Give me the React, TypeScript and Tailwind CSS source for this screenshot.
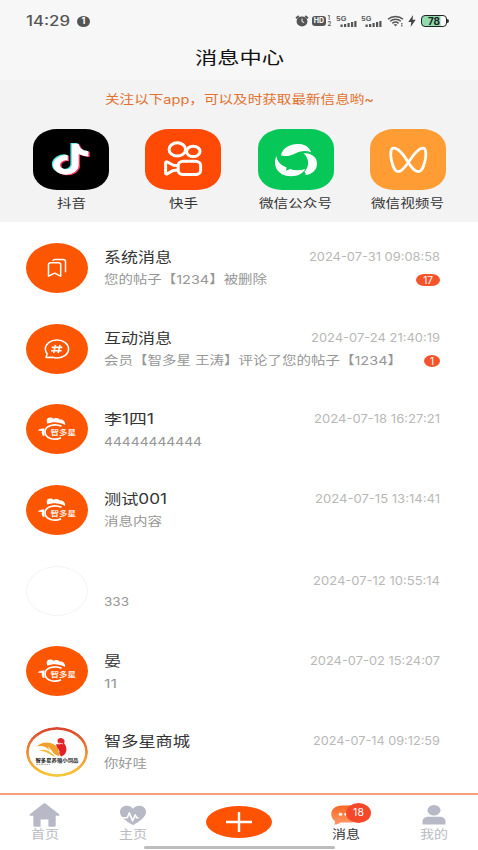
import { useLayoutEffect, useRef, useState } from "react";
import type { ReactNode } from "react";

interface IMessage {
  id: number;
  avatar: ReactNode;
  title: string;
  titleWidth: number;
  text: string;
  textWidth: number;
  time: string;
  timeWidth: number;
  badge?: string;
}

// Text stretched horizontally to a given width
const FitText = ({
  width,
  className = "",
  children,
}: {
  width: number;
  className?: string;
  children: string;
}) => {
  const ref = useRef<HTMLSpanElement>(null);
  const [scale, setScale] = useState(1);

  useLayoutEffect(() => {
    if (ref.current?.offsetWidth) {
      setScale(width / ref.current.getBoundingClientRect().width);
    }
  }, []);

  return (
    <span className={`block shrink-0 ${className}`} style={{ width }}>
      <span
        ref={ref}
        className="inline-block origin-left whitespace-pre align-top"
        style={{ transform: `scaleX(${scale})` }}
      >
        {children}
      </span>
    </span>
  );
};

const Signal = () => (
  <svg width="21" height="13" viewBox="0 0 21 13" fill="#555">
    <text x="0" y="5.6" fontSize="6.5" fontWeight="600" textLength="10.5" lengthAdjust="spacingAndGlyphs">
      5G
    </text>
    <rect x="4.5" y="9.5" width="2.2" height="2.5" />
    <rect x="8" y="9" width="2.2" height="3" />
    <rect x="11.5" y="8" width="2.2" height="4" />
    <rect x="15" y="7" width="2.2" height="5" />
    <rect x="18.3" y="6" width="2.2" height="6" />
  </svg>
);

const StatusBar = () => (
  <div className="flex h-[42px] items-center pl-[26px] pr-[29px] text-[#555]">
    <FitText width={44} className="text-[14px] font-medium leading-[16px]">
      14:29
    </FitText>
    <span className="ml-[7px] flex h-[11px] w-[13px] items-center justify-center rounded-[50%] bg-[#555] text-[9px] font-bold text-white">
      1
    </span>
    <div className="ml-auto flex items-center">
      <svg width="14" height="12" viewBox="0 0 14 12">
        <ellipse cx="7" cy="6.4" rx="5.4" ry="5" fill="#555" />
        <path d="M1 3.2L3.8 1M13 3.2L10.2 1" stroke="#555" strokeWidth="1.8" />
        <path d="M7 3.6v3l2.2 1" stroke="#f7f7f7" strokeWidth="1" fill="none" />
      </svg>
      <span className="ml-[3px] flex h-[10px] w-[14px] items-center justify-center rounded-[3px] bg-[#555] text-[7px] font-bold text-white">
        HD
      </span>
      <svg className="ml-[1px]" width="5" height="12" viewBox="0 0 5 12" fill="#555">
        <text x="0.5" y="5.2" fontSize="6" fontWeight="600">1</text>
        <text x="0.5" y="11.2" fontSize="6" fontWeight="600">2</text>
      </svg>
      <div className="ml-[4px] flex gap-[4px]">
        <Signal />
        <Signal />
      </div>
      <svg className="ml-[5px]" width="17" height="12" viewBox="0 0 17 12" fill="none" stroke="#555" strokeWidth="1.5">
        <path d="M1 4.2C5 .6 12 .6 16 4.2M3.2 6.3C6.2 3.7 10.8 3.7 13.8 6.3M5.4 8.3C7.2 6.8 9.8 6.8 11.6 8.3" />
        <path d="M6.5 9.3h4L8.5 11.5z" fill="#555" stroke="none" />
        <path d="M14.8 8v3.5" strokeWidth="1.2" strokeDasharray="1.4 .6" />
      </svg>
      <svg className="ml-[4px]" width="8" height="12" viewBox="0 0 8 12" fill="#444">
        <path d="M5 0L.3 7h3L2.6 12 7.7 4.8H4.6z" />
      </svg>
      <div className="ml-[5px] flex h-[12px] w-[26px] items-center justify-center rounded-[4px] border-[1.5px] border-[#222] bg-gradient-to-r from-[#8fdcae] from-75% to-white to-80%">
        <span className="text-[10px] font-bold leading-none text-[#222]">78</span>
      </div>
      <div className="h-[4px] w-[2px] rounded-r bg-[#333]" />
    </div>
  </div>
);

const notePath =
  "M448,209.91a210.06,210.06,0,0,1-122.77-39.25V349.38A162.55,162.55,0,1,1,185,188.31V278.2a74.62,74.62,0,1,0,52.23,71.18V0l88,0a121.18,121.18,0,0,0,1.86,22.17h0A122.18,122.18,0,0,0,381,102.39a121.43,121.43,0,0,0,67,20.14Z";

const DouyinIcon = () => (
  <svg width="76" height="61" viewBox="0 0 76 61">
    <g transform="translate(18.8 14) scale(.0785 .0605)">
      <path d={notePath} fill="#4de8e2" />
    </g>
    <g transform="translate(21.6 15.4) scale(.0785 .0605)">
      <path d={notePath} fill="#f5305d" />
    </g>
    <g transform="translate(20.2 14.7) scale(.0785 .0605)">
      <path d={notePath} fill="#fff" />
    </g>
  </svg>
);

const KuaishouIcon = () => (
  <svg width="76" height="61" viewBox="0 0 76 61" fill="none" stroke="#fff" strokeWidth="3" strokeLinejoin="round">
    <ellipse cx="32.3" cy="20.4" rx="8.2" ry="6.6" />
    <ellipse cx="48.3" cy="22.4" rx="6.7" ry="5.2" />
    <rect x="33.2" y="32.2" width="22.400" height="13.400" rx="5" ry="4" />
    <path d="M33 36.600l-4.600-.4-6-3.200c-1-.5-1.800-.1-1.800.9v10c0 1 .8 1.400 1.800.9l6-3.400 4.600-.4" />
  </svg>
);

const OfficialIcon = () => (
  <svg width="76" height="61" viewBox="0 0 76 61" fill="#fff">
    <path d="M23 26.200C24.500 18.500 33 14.300 41.500 15c6.500.5 10.300 4 11.500 8.300-3.500-1.500-7.500-1.800-11.500-.5-5.800 2-10 6-18.500 3.400z" />
    <path d="M45.500 24.300c7.500-.8 13.500 3.700 13.500 10.100 0 6.300-4.800 11-11.800 11.600.8-1.200.6-2.200-.9-3 5.300-5.700 5.200-13.300-.8-18.700z" />
    <path d="M18.500 27c-4.500 9.500 1.500 20.200 14.500 20.200 7 0 12-2.500 14.200-7.200-5.700 1.700-10.700 1.500-15 0l-4.200 1.800.6-3.400c-5.600-2-9.600-5.700-10.100-11.400z" />
  </svg>
);

const ChannelsIcon = () => (
  <svg width="76" height="61" viewBox="0 0 76 61" fill="none" stroke="#fff" strokeWidth="2.800" strokeLinejoin="round">
    <path d="M38.300 33.500C34.500 27 28 18.500 23.200 19.200c-5.500.9-.9 23.500 4.900 23.500 3.700 0 7-4.600 10.200-9.200 4.300-6.500 10.500-15 15.100-14.300 5.500.9.900 23.500-4.900 23.500-3.700 0-6.800-3.900-10.200-9.200z" />
  </svg>
);

const apps = [
  { name: "抖音", width: 29, bg: "bg-black", icon: <DouyinIcon /> },
  { name: "快手", width: 29, bg: "bg-[#ff4a06]", icon: <KuaishouIcon /> },
  { name: "微信公众号", width: 73, bg: "bg-[#07c758]", icon: <OfficialIcon /> },
  { name: "微信视频号", width: 73, bg: "bg-[#ff9c33]", icon: <ChannelsIcon /> },
];

const SystemAvatar = () => (
  <svg width="62" height="50" viewBox="0 0 62 50" fill="none" stroke="#fff" strokeWidth="1.500" strokeLinejoin="round">
    <path d="M22.500 33.200V21.800c0-1.300.8-2 2.200-2h7.800c1.400 0 2.200.7 2.200 2v11.400l-6.100-3z" />
    <path d="M27 17.500c.4-.9 1-1.100 2-1.100h8c1.600 0 2.500.7 2.500 2v10.300" strokeLinecap="round" />
  </svg>
);

const InteractAvatar = () => (
  <svg width="62" height="50" viewBox="0 0 62 50" fill="none" stroke="#fff" strokeWidth="1.500" strokeLinejoin="round">
    <path d="M20 33.500l1.200-3.700c-1.300-1.500-1.900-3-1.900-4.800 0-5 5.200-8.900 11.700-8.900S42.600 20 42.600 25 37.500 33.900 31 33.900c-1.500 0-3-.2-4.300-.6z" />
    <path d="M29.500 20.800l-1.800 8.400M34 20.800l-1.800 8.400M25.700 23.400h10.600M25 26.700h10.600" strokeWidth="1.600" />
  </svg>
);

const BrandAvatar = () => (
  <svg width="62" height="50" viewBox="0 0 62 50" fill="#fff">
    <path d="M21.500 19.800c-1.500-3-.9-6 2.300-6.200 1.800-.1 2.900.4 3.700 1.100 1.800-1.200 5.200-1 6.400.9 2.900-.3 5.500 1.700 5.300 5.400-3-1.600-5.200-2.300-8.700-2.600-3.500-.3-6.200.3-9 1.400z" />
    <path d="M35.500 22.300c-6.500-3-16.300-1-16.500 5.400-.1 6.700 9.500 9.300 16 6" fill="none" stroke="#fff" strokeWidth="1.700" />
    <path d="M18.500 24.600c-2.500-.5-5.200.1-6.800 1.900l4.300.5-.4 1.700 1.200 3.200 2-.4-.8-3z" />
    <text x="24.500" y="31" fontSize="7" fontWeight="700" textLength="25.500" lengthAdjust="spacingAndGlyphs" fillOpacity=".9">
      智多星
    </text>
  </svg>
);

const ShopAvatar = () => (
  <svg width="62" height="50" viewBox="0 0 62 50">
    <defs>
      <linearGradient id="ring" x1="0" y1="0" x2="0" y2="1">
        <stop offset="0" stopColor="#d9472f" />
        <stop offset=".5" stopColor="#ee8a35" />
        <stop offset="1" stopColor="#f5c93a" />
      </linearGradient>
    </defs>
    <ellipse cx="31" cy="25" rx="29.600" ry="23.600" fill="#fff" stroke="url(#ring)" strokeWidth="2.800" />
    <path d="M10.500 19.500C17 13.500 26 14.500 32 20.500l1.500 8.500c-3.500-.5-5.500-2-7.500-5-1.500-2.500-3-3.800-5-4.300 1.500 1 2.300 2.300 2.600 4-2.800-3.700-7-5.400-13.100-4.200z" fill="#f2a02d" />
    <path d="M13 24c5-2.300 9-1.500 12.500 2.300l4 3C24 29 21.500 23.500 13 24z" fill="#f5bd3c" />
    <path d="M31.500 13.200c1-2.500 4-3 5.700-1.200 1.500.9 1.800 2.700.9 4.200 3.800 4.800 3.200 11-2.800 13.300-1.900-1.500-2.300-3.300-1.900-5.300-1.200-2.700-2.900-4.200-3.500-6.900 1.200-.3 2.800-.2 4.500.2-.8-.9-1.500-1-2.500-.9z" fill="#e32227" />
    <path d="M30.300 16.700c2.400-.7 4.800-.6 6.600.2" fill="none" stroke="#fff" strokeWidth=".8" />
    <text x="9.500" y="35.300" fontSize="4.800" fontWeight="700" fill="#222" textLength="43" lengthAdjust="spacingAndGlyphs">
      智多星养殖小饲品
    </text>
    <path d="M10 37.500h14" stroke="#999" strokeWidth=".7" strokeDasharray="2 .6" />
  </svg>
);

const Avatar = ({ className, children }: { className: string; children?: ReactNode }) => (
  <div className={`h-[50px] w-[62px] shrink-0 overflow-hidden rounded-[50%] ${className}`}>
    {children}
  </div>
);

const brand = (
  <Avatar className="bg-[#fd5603]">
    <BrandAvatar />
  </Avatar>
);

const messages: IMessage[] = [
  {
    id: 1,
    avatar: <Avatar className="bg-[#fd5603]"><SystemAvatar /></Avatar>,
    title: "系统消息",
    titleWidth: 68,
    text: "您的帖子【1234】被删除",
    textWidth: 163,
    time: "2024-07-31 09:08:58",
    timeWidth: 131,
    badge: "17",
  },
  {
    id: 2,
    avatar: <Avatar className="bg-[#fd5603]"><InteractAvatar /></Avatar>,
    title: "互动消息",
    titleWidth: 68,
    text: "会员【智多星 王涛】评论了您的帖子【1234】",
    textWidth: 298,
    time: "2024-07-24 21:40:19",
    timeWidth: 129,
    badge: "1",
  },
  {
    id: 3,
    avatar: brand,
    title: "李1四1",
    titleWidth: 50,
    text: "44444444444",
    textWidth: 98,
    time: "2024-07-18 16:27:21",
    timeWidth: 126,
  },
  {
    id: 4,
    avatar: brand,
    title: "测试001",
    titleWidth: 63,
    text: "消息内容",
    textWidth: 58,
    time: "2024-07-15 13:14:41",
    timeWidth: 125,
  },
  {
    id: 5,
    avatar: <Avatar className="border-[1.5px] border-[#f4f4f4] bg-white" />,
    title: "",
    titleWidth: 0,
    text: "333",
    textWidth: 25,
    time: "2024-07-12 10:55:14",
    timeWidth: 127,
  },
  {
    id: 6,
    avatar: brand,
    title: "晏",
    titleWidth: 17,
    text: "11",
    textWidth: 13,
    time: "2024-07-02 15:24:07",
    timeWidth: 130,
  },
  {
    id: 7,
    avatar: <Avatar className="bg-white"><ShopAvatar /></Avatar>,
    title: "智多星商城",
    titleWidth: 86,
    text: "你好哇",
    textWidth: 43,
    time: "2024-07-14 09:12:59",
    timeWidth: 127,
  },
];

const MessageRow = ({ message }: { message: IMessage }) => (
  <div className="flex h-[80.7px] items-center pl-[26px] pr-[38px]">
    {message.avatar}
    <div className="ml-[16px] flex-1 pt-[2px]">
      <div className="flex h-[22px] items-center justify-between">
        <FitText width={message.titleWidth} className="text-[14px] leading-[22px] text-[#333]">
          {message.title}
        </FitText>
        <FitText width={message.timeWidth} className="text-[11.5px] leading-[22px] text-[#b8b8b8]">
          {message.time}
        </FitText>
      </div>
      <div
        className={`flex h-[22px] items-center justify-between ${
          message.title ? "mt-[1px]" : "-mt-[1px]"
        }`}
      >
        <FitText width={message.textWidth} className="text-[12px] leading-[22px] text-[#969696]">
          {message.text}
        </FitText>
        {message.badge && (
          <span
            className={`flex h-[12px] items-center justify-center rounded-[8px/6px] bg-[#f4542c] text-[10px] leading-none text-white ${
              message.badge.length > 1 ? "w-[24px]" : "w-[16px]"
            }`}
          >
            {message.badge}
          </span>
        )}
      </div>
    </div>
  </div>
);

const TabBar = () => (
  <div className="flex h-[57px] border-t-2 border-[#f3a27d] bg-white text-[12px] leading-[16px] text-[#b9bbc2]">
    <div className="flex w-[89px] flex-col items-center pt-[8px]">
      <svg width="31" height="24" viewBox="0 0 31 24" fill="#b7bac6">
        <path d="M14.300.7c.8-.6 1.600-.6 2.400 0l13.200 10.200c1.100.9.700 1.800-.7 1.800h-2.500v9.500c0 1-.7 1.600-1.800 1.600h-5.500v-7.300h-7.800v7.300H6.100c-1.100 0-1.800-.6-1.800-1.600v-9.500H1.800c-1.400 0-1.800-.9-.7-1.800z" />
      </svg>
      <FitText width={28}>首页</FitText>
    </div>
    <div className="flex w-[88px] flex-col items-center pt-[8px]">
      <svg width="28" height="24" viewBox="0 0 28 24">
        <path d="M14 22.300C8 18.500 1 14.500 1 9 1 5.300 3.900 2.800 7.600 2.800c2.700 0 5 1.100 6.400 3 1.400-1.900 3.700-3 6.400-3C24.100 2.800 27 5.300 27 9c0 5.500-7 9.500-13 13.300z" fill="#b7bac6" />
        <path d="M0 14.700h8.300l2-4.800 3.300 8 2.600-6 1.400 2.800h2" fill="none" stroke="#fff" strokeWidth="1.500" strokeLinejoin="round" />
      </svg>
      <FitText width={28}>主页</FitText>
    </div>
    <div className="flex w-[124px] flex-col items-center pt-[11px]">
      <div className="flex h-[32px] w-[66px] items-center justify-center rounded-[50%] bg-[#ff5303]">
        <svg width="28" height="22" viewBox="0 0 28 22" stroke="#fff" strokeWidth="2.400">
          <path d="M1 11h26M14 1v20" />
        </svg>
      </div>
      <div className="mt-[8px] h-[2.5px] w-[191px] shrink-0 rounded-full bg-[#bdbdbd]" />
    </div>
    <div className="flex w-[89px] flex-col items-center pt-[8px] text-[#333]">
      <div className="relative h-[24px] w-[29px]">
        <svg width="29" height="24" viewBox="0 0 29 24">
          <defs>
            <linearGradient id="bubble" x1="0" y1="0" x2="0" y2="1">
              <stop offset="0" stopColor="#f96522" />
              <stop offset="1" stopColor="#ff9a68" />
            </linearGradient>
          </defs>
          <path d="M11 2.500h10c5 0 8 3.800 8 8.500s-3 8.500-8 8.500H9.500c-1.500 1.400-3.500 2-6.500 2 .9-1 1.100-2.300.8-3.500C1.500 16.500.3 14 .3 11c0-4.700 4-8.500 10.700-8.500z" fill="url(#bubble)" />
          <ellipse cx="9.500" cy="11.300" rx="1.800" ry="1.500" fill="#fff" />
          <ellipse cx="14.500" cy="11.300" rx="1.100" ry="1.500" fill="#fff" />
        </svg>
        <span className="absolute left-[15px] top-0 flex h-[20px] w-[25px] items-center justify-center rounded-[50%] bg-[#f4482a] text-[10.5px] leading-none text-white">
          18
        </span>
      </div>
      <FitText width={28}>消息</FitText>
    </div>
    <div className="flex w-[88px] flex-col items-center pt-[8px]">
      <svg width="24" height="24" viewBox="0 0 24 24" fill="#b7bac6">
        <ellipse cx="12" cy="7.300" rx="6.500" ry="5.300" />
        <path d="M.5 21.500v-3c0-3 2.500-4.800 6-4.800h11c3.500 0 6 1.800 6 4.800v3z" />
      </svg>
      <FitText width={28}>我的</FitText>
    </div>
  </div>
);

const App = () => {
  return (
    <div className="flex h-[850px] w-[478px] flex-col overflow-hidden bg-white font-['Inter','Noto_Sans_CJK_SC',sans-serif]">
      <header className="h-[80px] shrink-0 bg-[#f7f7f7]">
        <StatusBar />
        <div className="flex h-[32px] items-center justify-center">
          <FitText width={89} className="text-[17.5px] leading-[30px] text-[#111]">
            消息中心
          </FitText>
        </div>
      </header>
      <section className="h-[142px] shrink-0 bg-[#f3f3f3] pt-[10px]">
        <FitText width={269} className="mx-auto text-[12px] leading-[20px] text-[#e2712f]">
          关注以下app，可以及时获取最新信息哟~
        </FitText>
        <div className="mt-[19px] flex justify-between pl-[33px] pr-[32px]">
          {apps.map((app) => (
            <div key={app.name} className="flex w-[76px] flex-col items-center">
              <div className={`h-[61px] w-[76px] overflow-hidden rounded-[24px/19px] ${app.bg}`}>
                {app.icon}
              </div>
              <FitText width={app.width} className="mt-[5px] text-[12px] leading-[18px] text-[#333]">
                {app.name}
              </FitText>
            </div>
          ))}
        </div>
      </section>
      <main className="flex-1 pt-[5.5px]">
        {messages.map((message) => (
          <MessageRow key={message.id} message={message} />
        ))}
      </main>
      <TabBar />
    </div>
  );
};

export default App;
